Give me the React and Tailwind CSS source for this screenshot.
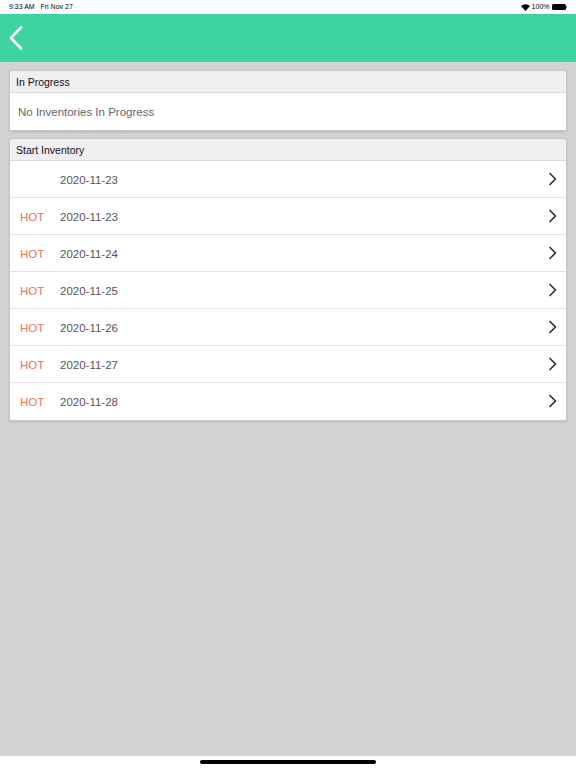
import React from 'react';

const rows = [
  { hot: false, date: '2020-11-23' },
  { hot: true, date: '2020-11-23' },
  { hot: true, date: '2020-11-24' },
  { hot: true, date: '2020-11-25' },
  { hot: true, date: '2020-11-26' },
  { hot: true, date: '2020-11-27' },
  { hot: true, date: '2020-11-28' },
];

const Chevron = () => (
  <svg width="9" height="14" viewBox="0 0 9 14" fill="none">
    <path d="M2 1.5l5.5 5.5L2 12.5" stroke="#333" strokeWidth="1.7" strokeLinecap="round" strokeLinejoin="round" />
  </svg>
);

export default function App() {
  return (
    <div className="h-[768px] flex flex-col font-['Liberation_Sans',Arial,sans-serif] bg-[#d3d3d6]">
      {/* status bar */}
      <div className="h-[14px] bg-white flex items-center justify-between px-[9px] text-[7px] text-black">
        <span>9:33 AM&nbsp;&nbsp;&nbsp;Fri Nov 27</span>
        <div className="flex items-center gap-[2px]">
          <svg width="9" height="7" viewBox="0 0 12 9">
            <path d="M6 9L0 2.5a8.5 8.5 0 0 1 12 0z" fill="#000" />
          </svg>
          <span>100%</span>
          <div className="flex items-center">
            <div className="w-[14px] h-[6px] rounded-[1.5px] bg-black" />
            <div className="w-[1px] h-[2px] bg-black/50 ml-[0.5px]" />
          </div>
        </div>
      </div>

      {/* nav bar */}
      <div className="h-[48px] bg-[#3dd3a3] flex items-center pl-[9px]">
        <svg width="14" height="24" viewBox="0 0 14 24" fill="none">
          <path d="M12 1.5L2 12l10 10.5" stroke="#fff" strokeWidth="2.6" strokeLinecap="round" strokeLinejoin="round" />
        </svg>
      </div>

      {/* content */}
      <div className="flex-1 px-[10px] pt-[9px] flex flex-col gap-[9px]">
        <div className="bg-white shadow-[0_0_0_1px_#c6c6c8,0_1px_3px_rgba(0,0,0,0.25)]">
          <div className="h-[22px] pt-[2px] bg-[#efeff1] border-b border-[#d8d8da] flex items-center pl-[6px] text-[10.5px] text-[#111]">
            In Progress
          </div>
          <div className="h-[37px] pt-[2px] flex items-center pl-[8px] text-[11.5px] text-[#666]">
            No Inventories In Progress
          </div>
        </div>

        <div className="bg-white shadow-[0_0_0_1px_#c6c6c8,0_1px_3px_rgba(0,0,0,0.25)]">
          <div className="h-[22px] pt-[2px] bg-[#efeff1] border-b border-[#d8d8da] flex items-center pl-[6px] text-[10.5px] text-[#111]">
            Start Inventory
          </div>
          {rows.map((r, i) => (
            <div
              key={i}
              className={`h-[37px] pt-[3px] flex items-center text-[11.5px] ${i < rows.length - 1 ? 'border-b border-[#e2e2e4]' : ''}`}
            >
              <span className="w-[50px] pl-[10px] text-[#e8735f]">{r.hot ? 'HOT' : ''}</span>
              <span className="flex-1 text-[#555]">{r.date}</span>
              <div className="pr-[9px] mb-[4px] flex items-center">
                <Chevron />
              </div>
            </div>
          ))}
        </div>
      </div>

      {/* home indicator */}
      <div className="h-[12px] bg-white flex justify-center pt-[4px]">
        <div className="w-[176px] h-[4px] rounded-full bg-black" />
      </div>
    </div>
  );
}
